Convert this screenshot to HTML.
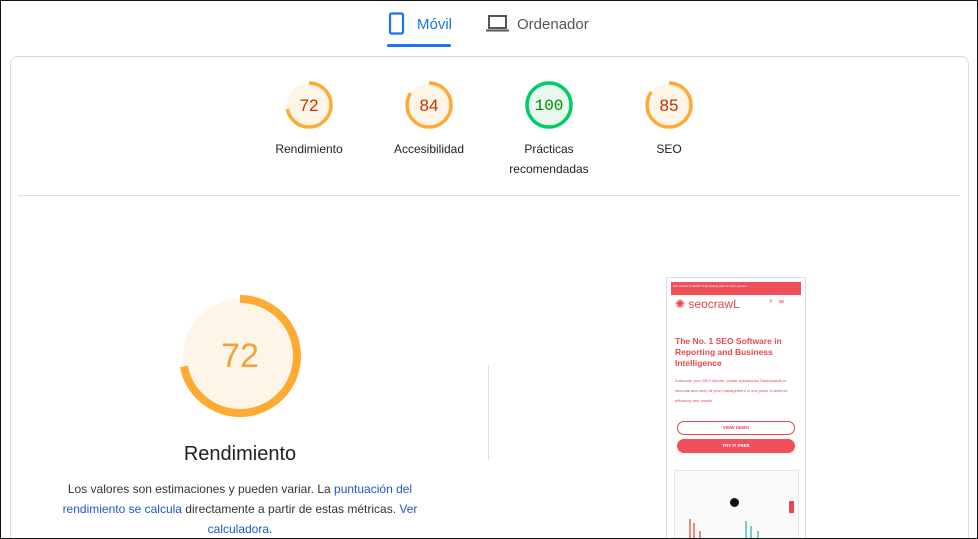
<!DOCTYPE html>
<html style="overflow:hidden;width:978px;height:539px"><head><meta charset="utf-8"><style>
*{margin:0;padding:0;box-sizing:border-box}
body{width:978px;height:539px;overflow:hidden;background:#fff;font-family:"Liberation Sans",Arial,sans-serif;position:relative}
.frame{position:absolute;left:0;top:0;width:978px;height:539px;border:1px solid #111;pointer-events:none;z-index:10}
.tab{position:absolute;top:14px;font-size:15px}
.card{position:absolute;left:10px;top:56px;width:959px;height:483px;border:1px solid #dadada;border-bottom:none;border-radius:8px 8px 0 0}
.g{position:absolute;text-align:center;font-size:12px;color:#212121;width:120px;line-height:20px}
.g svg{display:block;margin:0 auto 9px}
a{color:#1a55d4;text-decoration:none}
</style></head><body>
<div class="frame"></div>
<div class="tab" style="left:388px;color:#1a73e8">
<svg width="18" height="24" style="position:absolute;left:0;top:-2px" viewBox="0 0 18 24"><rect x="2" y="1.5" width="13" height="20" rx="1.5" fill="none" stroke="#1a73e8" stroke-width="2.2"/></svg>
<span style="position:absolute;left:29px;top:2px;white-space:nowrap">Móvil</span></div>
<div style="position:absolute;left:387px;top:44px;width:64px;height:3px;background:#1a73e8;border-radius:2px"></div>
<div class="tab" style="left:486px;color:#555">
<svg width="24" height="20" style="position:absolute;left:0;top:0" viewBox="0 0 24 20"><rect x="3" y="2" width="17" height="12" fill="none" stroke="#555" stroke-width="2"/><rect x="0" y="15.5" width="23" height="2" fill="#555"/></svg>
<span style="position:absolute;left:31px;top:2px;white-space:nowrap">Ordenador</span></div>
<div class="card"></div>
<div style="position:absolute;left:18px;top:195px;width:942px;height:1px;background:#e0e0e0"></div>

<div class="g" style="left:249px;top:80px"><svg width="50" height="50" viewBox="0 0 50 50"><circle cx="25" cy="25" r="22" fill="#fef5e9"/><circle cx="25" cy="25" r="22" fill="none" stroke="#fa3" stroke-width="3.5" stroke-dasharray="99.5 200" transform="rotate(-90 25 25)"/><text x="25" y="31" text-anchor="middle" font-size="17" fill="#c33300" font-family="Liberation Sans">72</text></svg>Rendimiento</div>
<div class="g" style="left:369px;top:80px"><svg width="50" height="50" viewBox="0 0 50 50"><circle cx="25" cy="25" r="22" fill="#fef5e9"/><circle cx="25" cy="25" r="22" fill="none" stroke="#fa3" stroke-width="3.5" stroke-dasharray="116 200" transform="rotate(-90 25 25)"/><text x="25" y="31" text-anchor="middle" font-size="17" fill="#c33300" font-family="Liberation Sans">84</text></svg>Accesibilidad</div>
<div class="g" style="left:489px;top:80px"><svg width="50" height="50" viewBox="0 0 50 50"><circle cx="25" cy="25" r="22" fill="#e8f8ee"/><circle cx="25" cy="25" r="22" fill="none" stroke="#0c6" stroke-width="3.5"/><text x="25" y="30" text-anchor="middle" font-size="16" fill="#080" font-family="Liberation Mono">100</text></svg>Prácticas<br>recomendadas</div>
<div class="g" style="left:609px;top:80px"><svg width="50" height="50" viewBox="0 0 50 50"><circle cx="25" cy="25" r="22" fill="#fef5e9"/><circle cx="25" cy="25" r="22" fill="none" stroke="#fa3" stroke-width="3.5" stroke-dasharray="117.5 200" transform="rotate(-90 25 25)"/><text x="25" y="31" text-anchor="middle" font-size="17" fill="#c33300" font-family="Liberation Sans">85</text></svg>SEO</div>

<svg style="position:absolute;left:179px;top:295px" width="122" height="122" viewBox="0 0 122 122"><circle cx="61" cy="61" r="57" fill="#fef5e9"/><circle cx="61" cy="61" r="57" fill="none" stroke="#fa3" stroke-width="8" stroke-dasharray="257.9 400" transform="rotate(-90 61 61)"/><text x="61" y="72" text-anchor="middle" font-size="34" fill="#f5a13a" font-family="Liberation Sans">72</text></svg>
<div style="position:absolute;left:40px;width:400px;top:443px;text-align:center;font-size:20px;color:#212121">Rendimiento</div>
<div style="position:absolute;left:55px;width:370px;top:479px;text-align:center;font-size:12px;line-height:20px;color:#333">Los valores son estimaciones y pueden variar. La <a>puntuación del rendimiento se calcula</a> directamente a partir de estas métricas. <a>Ver calculadora</a>.</div>
<div style="position:absolute;left:488px;top:365px;width:1px;height:95px;background:#ddd"></div>

<div style="position:absolute;left:666px;top:277px;width:140px;height:270px;border:1px solid #ddd;overflow:hidden;font-family:'Liberation Sans',sans-serif">
<div style="position:absolute;left:4px;top:4px;width:130px;height:13px;background:#f0505a;font-size:3px;color:#fff;padding:2px">Our partner in SERP CHE ranking data for your queries ...</div>
<div style="position:absolute;left:8px;top:19px;font-size:12px;color:#e5484d">✺ seocrawL</div>
<div style="position:absolute;left:102px;top:20px;font-size:7px;color:#e5484d">⌕ &nbsp;&nbsp;☰</div>
<div style="position:absolute;left:8px;top:58px;width:118px;font-size:8.5px;font-weight:bold;line-height:11px;color:#e5484d">The No. 1 SEO Software in Reporting and Business Intelligence</div>
<div style="position:absolute;left:8px;top:98px;width:125px;font-size:4px;line-height:10px;color:#e5484d">Automate your SEO reports, create spectacular Dashboards in seconds and unify all your management in one place to achieve efficiency and results.</div>
<div style="position:absolute;left:10px;top:143px;width:118px;height:14px;border:1px solid #e5484d;border-radius:8px;font-size:4.5px;font-weight:bold;color:#e5484d;text-align:center;line-height:12px">VIEW DEMO</div>
<div style="position:absolute;left:10px;top:161px;width:118px;height:14px;background:#f0505a;border-radius:8px;font-size:4.5px;font-weight:bold;color:#fff;text-align:center;line-height:14px">TRY IT FREE</div>
<div style="position:absolute;left:7px;top:192px;width:125px;height:80px;border:1px solid #e5e5e5;background:#fafafa">
<div style="position:absolute;left:55px;top:27px;width:9px;height:9px;border-radius:50%;background:#111"></div>
<div style="position:absolute;left:14px;top:48px;width:2px;height:22px;background:#e88"></div>
<div style="position:absolute;left:18px;top:52px;width:2px;height:18px;background:#e88"></div>
<div style="position:absolute;left:24px;top:60px;width:2px;height:10px;background:#e88"></div>
<div style="position:absolute;left:70px;top:50px;width:2px;height:20px;background:#7cc"></div>
<div style="position:absolute;left:75px;top:55px;width:2px;height:15px;background:#7cc"></div>
<div style="position:absolute;left:82px;top:60px;width:2px;height:10px;background:#7cc"></div>
<div style="position:absolute;left:114px;top:30px;width:5px;height:12px;background:#e5484d"></div>
</div>
</div>
</body></html>
